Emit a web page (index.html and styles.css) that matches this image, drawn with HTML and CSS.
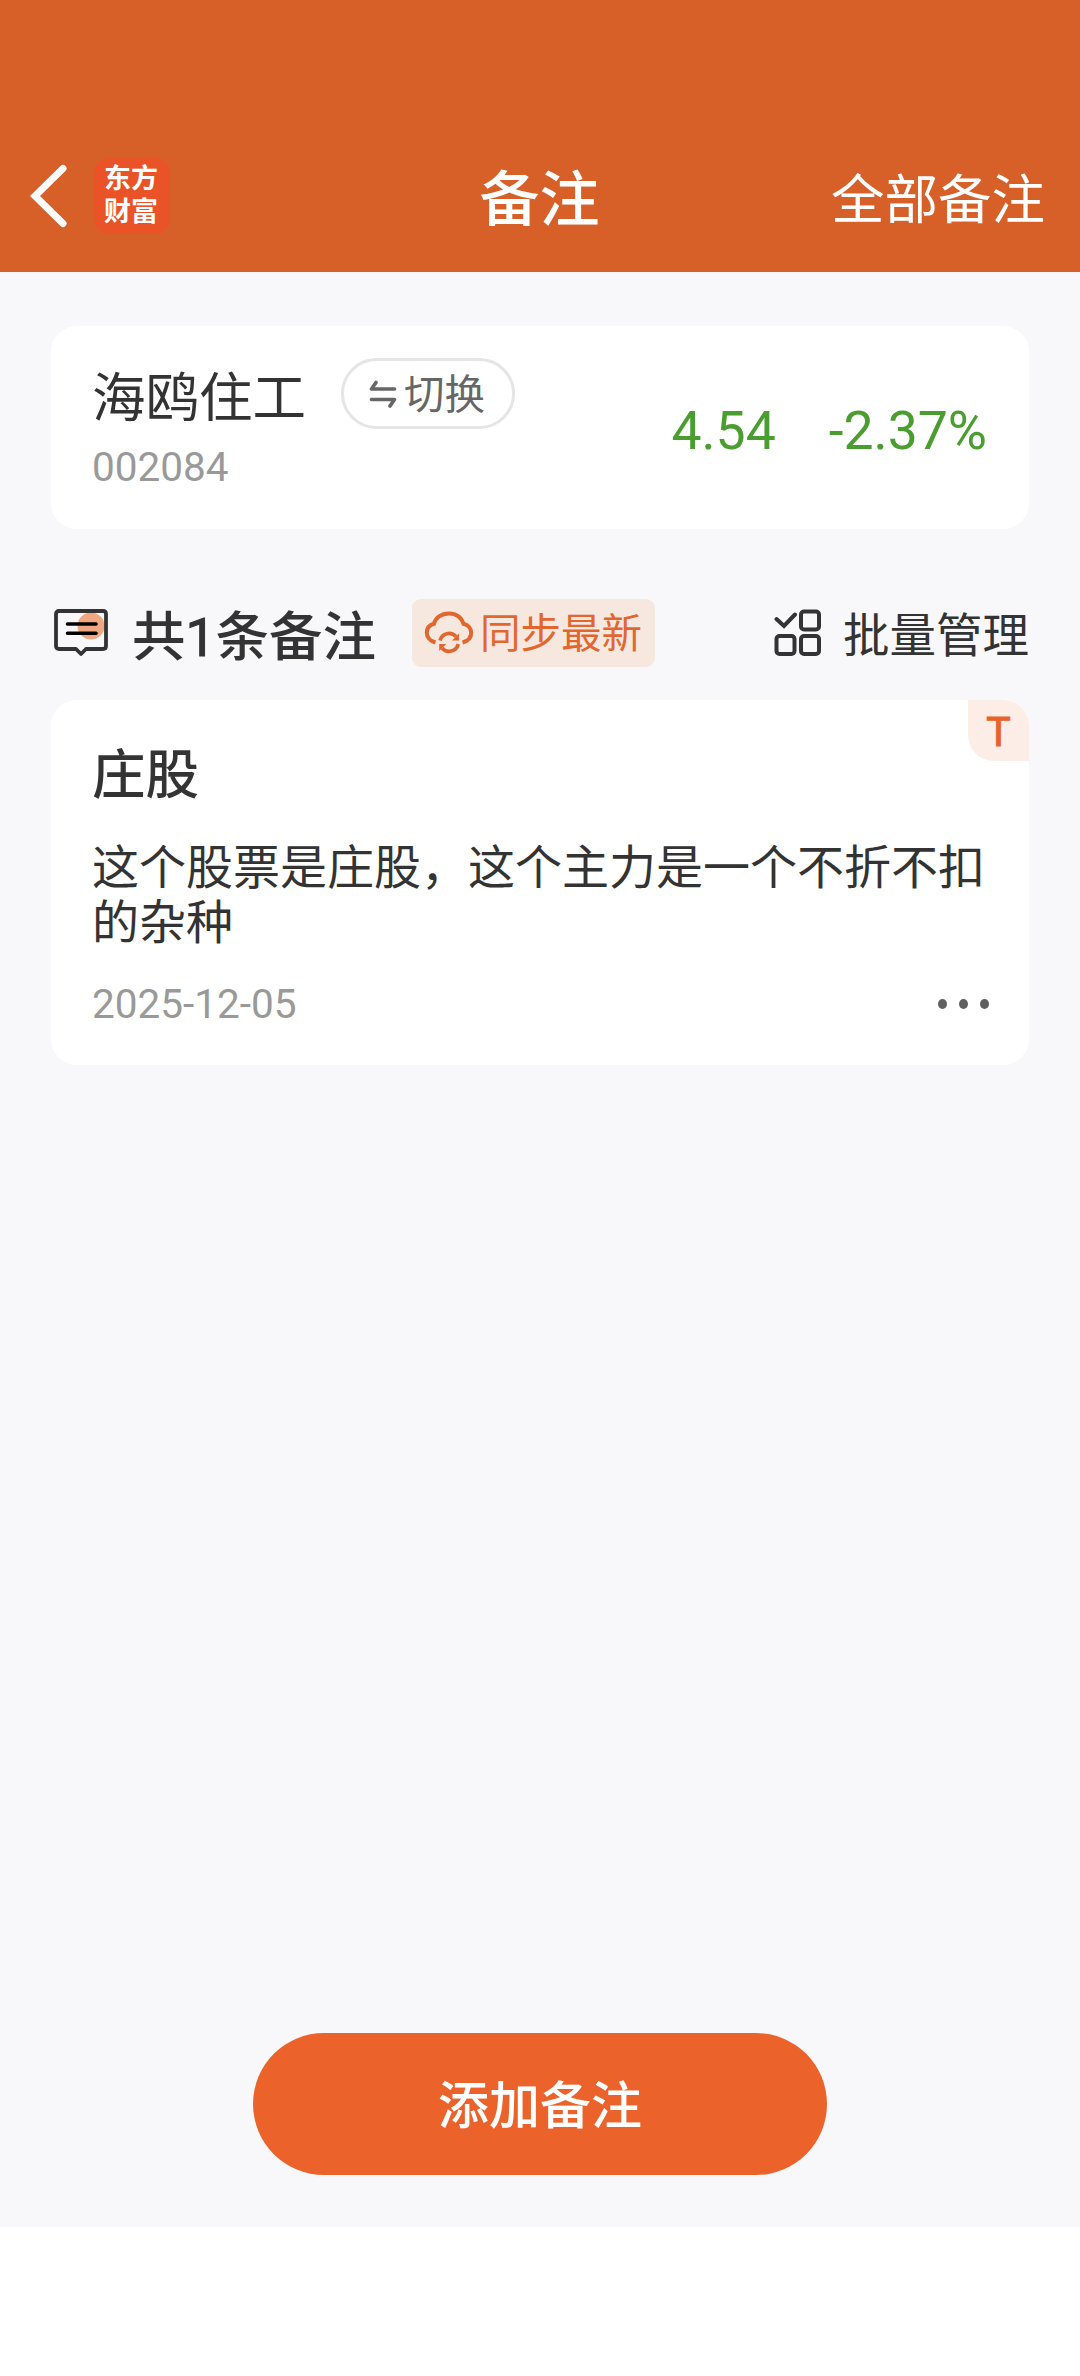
FILE: index.html
```html
<!DOCTYPE html>
<html lang="zh-CN">
<head>
<meta charset="utf-8">
<title>备注</title>
<link rel="stylesheet" href="styles.css">
</head>
<body>
<div class="app">
  <header class="header">
    <div class="header-left">
      <svg class="back" width="38" height="64" viewBox="0 0 38 64"><path d="M34 4.500 L6 32 L34 59.500" fill="none" stroke="#fff" stroke-width="7" stroke-linecap="round" stroke-linejoin="miter"/></svg>
      <div class="logo"><span>东方</span><span>财富</span></div>
    </div>
    <h1 class="title">备注</h1>
    <a class="all">全部备注</a>
  </header>

  <main class="main">
    <section class="card stock">
      <div class="stock-info">
        <div class="stock-line">
          <span class="stock-name">海鸥住工</span>
          <button class="switch">
            <svg width="28" height="28" viewBox="0 0 28 28"><path d="M7 2.500 L2.500 9 H25.500 M2.500 19.500 H25.500 L21 26" fill="none" stroke="#666" stroke-width="3.600" stroke-linecap="round" stroke-linejoin="round"/></svg>
            <span>切换</span>
          </button>
        </div>
        <div class="stock-code">002084</div>
      </div>
      <div class="quote"><span>4.54</span><span>-2.37%</span></div>
    </section>

    <div class="toolbar">
      <svg class="note-icon" width="56" height="50" viewBox="0 0 56 50">
        <circle cx="38" cy="18" r="13.500" fill="#f0a680"/>
        <path d="M6 3 H50 Q53 3 53 6 V38 Q53 41 50 41 H33 L28 46 L23 41 H6 Q3 41 3 38 V6 Q3 3 6 3 Z" fill="none" stroke="#333" stroke-width="3.800" stroke-linejoin="round"/>
        <path d="M14.500 16 H43 M14.500 25.300 H43" stroke="#000" stroke-width="3.600" stroke-linecap="round"/>
      </svg>
      <span class="count">共<span class="num">1</span>条备注</span>
      <button class="sync">
        <svg width="50" height="44" viewBox="0 0 50 44">
          <g fill="none" stroke="#e2672f" stroke-width="4">
            <path d="M11.500 31.500 C6 30 2.800 26 2.800 21.800 C2.800 17.500 5.500 14 10 12.800 C11.500 7 17 2.500 25 2.500 C32.500 2.500 37.500 7 39.500 12.800 C44 14 47.200 17.500 47.200 21.800 C47.200 26 44.500 30 38.500 31.500"/>
            <path d="M16 29.500 A9.300 9.300 0 0 1 32 25.500 M34.200 33 A9.300 9.300 0 0 1 18 37" stroke-width="3.600"/>
          </g>
          <path d="M35 22.500 V29.500 H28 Z M15.200 40 V33 H22.200 Z" fill="#e2672f"/>
        </svg>
        <span>同步最新</span>
      </button>
      <a class="manage">
        <svg width="48" height="48" viewBox="0 0 48 48">
          <g fill="none" stroke="#333" stroke-width="4">
            <path d="M2.500 10 L10 17 L21 5.500" stroke-linecap="round"/>
            <rect x="27" y="2.500" width="18" height="18" rx="3"/>
            <rect x="2.500" y="27" width="18" height="18" rx="3"/>
            <rect x="27" y="27" width="18" height="18" rx="3"/>
          </g>
        </svg>
        <span>批量管理</span>
      </a>
    </div>

    <article class="card note">
      <span class="tag">T</span>
      <h2 class="note-title">庄股</h2>
      <p class="note-body">这个股票是庄股，这个主力是一个不折不扣的杂种</p>
      <footer class="note-foot">
        <time>2025-12-05</time>
        <span class="more"><i></i><i></i><i></i></span>
      </footer>
    </article>

    <button class="add">添加备注</button>
  </main>
</div>
</body>
</html>
```

FILE: styles.css
```css
* { box-sizing: border-box; }
body {
  margin: 0;
  background: #fff;
  color: #333;
  font-family: Roboto, "Noto Sans CJK SC", sans-serif;
}
h1, h2, p { margin: 0; }
button { border: 0; padding: 0; margin: 0; font: inherit; color: inherit; }
svg { display: block; flex: none; }
span, a, time { white-space: nowrap; }

.app { width: 1080px; height: 2376px; display: flex; flex-direction: column; }

.header {
  height: 272px;
  padding: 120px 35px 0 29px;
  background: #d75f28;
  color: #fff;
  display: grid;
  grid-template-columns: 1fr auto 1fr;
  align-items: center;
}
.header-left { display: flex; align-items: center; gap: 27px; }
.logo {
  width: 76px;
  height: 76px;
  border-radius: 16px;
  background: #ea5328;
  display: flex;
  flex-direction: column;
  align-items: center;
  padding: 5px 2px 0 0;
  font-size: 27px;
  line-height: 33px;
  font-weight: 700;
}
.title { font-size: 60px; line-height: 80px; font-weight: 500; padding: 9px 0 0 5px; }
.all { justify-self: end; font-size: 53.500px; line-height: 80px; padding-top: 9px; }

.main {
  height: 1955px;
  padding: 54px 51px 52px;
  background: #f8f8fa;
  display: flex;
  flex-direction: column;
}
.card { background: #fff; border-radius: 26px; }

.stock {
  height: 203px;
  padding: 32px 42px 0 41px;
  display: flex;
  justify-content: space-between;
}
.stock-line { display: flex; align-items: center; gap: 35px; height: 71px; }
.stock-name { font-size: 53.500px; line-height: 71px; padding-top: 9px; }
.switch {
  width: 174px;
  height: 71px;
  border: 3px solid #e5e5e5;
  border-radius: 36px;
  background: #fff;
  color: #666;
  font-size: 40.500px;
  line-height: 50px;
  display: flex;
  align-items: center;
  justify-content: center;
  gap: 7px;
}
.switch span { padding: 3px 2px 0 0; }
.stock-code { font-size: 40.500px; line-height: 48px; margin-top: 14px; color: #999; }
.quote {
  display: flex;
  gap: 53px;
  padding-top: 41px;
  font-size: 53.500px;
  line-height: 64px;
  color: #4a9e2f;
}

.toolbar { height: 68px; margin: 70px 0 33px; display: flex; align-items: center; }
.note-icon { margin-left: 2px; }
.count { font-size: 53.500px; line-height: 68px; font-weight: 500; margin-left: 23px; padding-top: 10px; }
.num { font-weight: 400; -webkit-text-stroke: 1px currentColor; }
.sync {
  width: 243px;
  height: 68px;
  margin-left: 36px;
  border-radius: 9px;
  background: #f6e8df;
  color: #e2672f;
  font-size: 40.500px;
  line-height: 50px;
  display: flex;
  align-items: center;
  padding-left: 12px;
  gap: 6px;
}
.sync span { padding-top: 2px; }
.manage {
  margin-left: auto;
  display: flex;
  align-items: center;
  gap: 21px;
  font-size: 46.500px;
  line-height: 68px;
}
.manage span { padding-top: 6px; }

.note { position: relative; height: 365px; padding: 42px 40px 0 41px; }
.tag {
  position: absolute;
  top: 0;
  right: 0;
  width: 61px;
  height: 61px;
  border-radius: 0 26px 0 26px;
  background: #fceee6;
  color: #e8622a;
  font-size: 41px;
  line-height: 64px;
  -webkit-text-stroke: 1px currentColor;
  text-align: center;
}
.note-title { font-size: 53.500px; line-height: 68px; font-weight: 500; }
.note-body { font-size: 47px; line-height: 55px; margin-top: 30px; }
.note-foot {
  display: flex;
  justify-content: space-between;
  align-items: center;
  margin-top: 30px;
  font-size: 40.500px;
  line-height: 48px;
  color: #999;
}
.more { display: flex; gap: 12px; }
.more i { width: 9px; height: 10px; border-radius: 50%; background: #606060; }

.add {
  width: 574px;
  height: 142px;
  margin: auto auto 0;
  padding-top: 6px;
  border-radius: 71px;
  background: #eb622b;
  color: #fff;
  font-size: 51px;
  font-weight: 500;
  line-height: 60px;
}
```
